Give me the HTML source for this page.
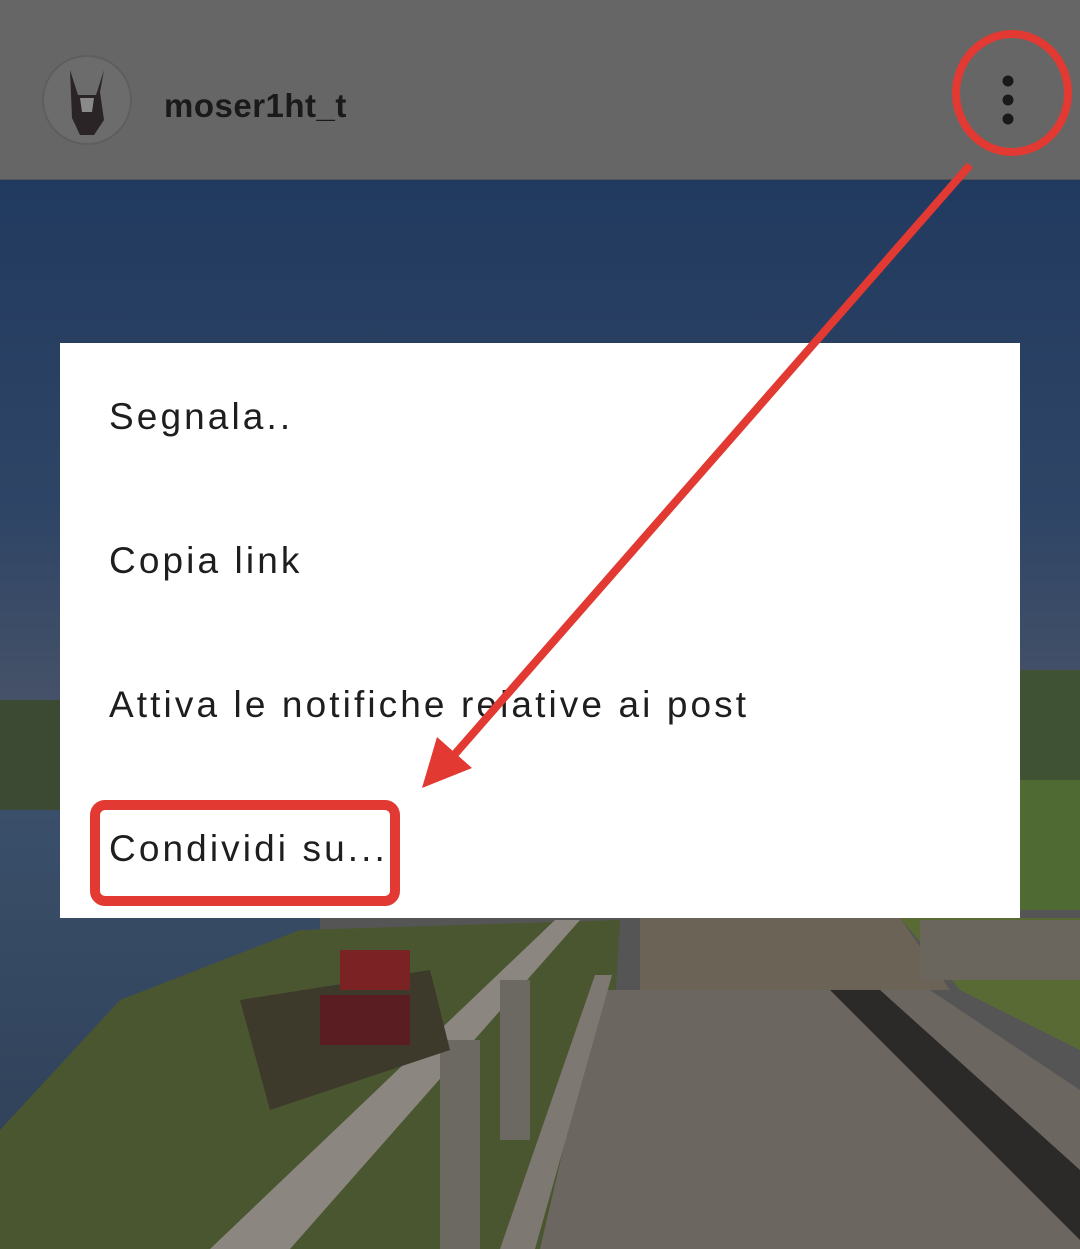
<!DOCTYPE html>
<html><head><meta charset="utf-8"><style>
html,body{margin:0;padding:0;width:1080px;height:1249px;overflow:hidden;background:#555}
.t{position:absolute;left:109px;font-family:"Liberation Sans","Noto Sans CJK JP",sans-serif;font-size:37px;color:#1e1e1e;letter-spacing:3.1px;white-space:nowrap}
</style></head><body>
<svg width="1080" height="1249" style="position:absolute;left:0;top:0">
<defs>
<linearGradient id="sky" x1="0" y1="0" x2="0" y2="1">
<stop offset="0" stop-color="#213a5f"/><stop offset="0.6" stop-color="#2f4566"/><stop offset="1" stop-color="#4a5468"/>
</linearGradient>
<linearGradient id="water" x1="0" y1="0" x2="0" y2="1">
<stop offset="0" stop-color="#3a4f6a"/><stop offset="1" stop-color="#2e3e55"/>
</linearGradient>
</defs>
<rect x="0" y="180" width="1080" height="560" fill="url(#sky)"/>
<rect x="0" y="700" width="60" height="110" fill="#3c4a34"/>
<rect x="1020" y="670" width="60" height="120" fill="#3f5234"/>
<rect x="1020" y="780" width="60" height="130" fill="#4f6a33"/>
<rect x="0" y="810" width="320" height="439" fill="url(#water)"/>
<polygon points="0,1130 120,1000 300,930 620,920 600,1249 0,1249" fill="#4a5630"/>
<polygon points="640,918 900,918 950,990 640,990" fill="#6b6456"/>
<polygon points="900,918 1080,918 1080,1050 960,990" fill="#5a6a35"/>
<polygon points="600,990 930,990 1080,1090 1080,1249 540,1249" fill="#6b6660"/>
<polygon points="830,990 880,990 1080,1170 1080,1240" fill="#2c2a28"/>
<polygon points="210,1249 555,920 580,920 290,1249" fill="#8b8680"/>
<polygon points="500,1249 595,975 612,975 535,1249" fill="#7d7872"/>
<rect x="440" y="1040" width="40" height="209" fill="#6c6862"/>
<rect x="500" y="980" width="30" height="160" fill="#6c6862"/>
<polygon points="240,1000 430,970 450,1050 270,1110" fill="#3d3a2c"/>
<rect x="340" y="950" width="70" height="40" fill="#7a2224"/>
<rect x="320" y="995" width="90" height="50" fill="#5a1e22"/>
<rect x="920" y="920" width="160" height="60" fill="#6a665e"/>
<rect x="0" y="0" width="1080" height="179" fill="#666666"/>
<circle cx="87" cy="100" r="44" fill="#6c6c6c" stroke="#5e5e5e" stroke-width="2"/>
<path d="M70 70 L78 95 L96 95 L104 70 L100 92 L104 120 L94 135 L80 135 L72 118 Z" fill="#2a2426"/>
<path d="M80 98 L94 98 L92 112 L82 112 Z" fill="#8a8a8a"/>
<text x="164" y="117" font-family="Liberation Sans,sans-serif" font-weight="bold" font-size="33" fill="#1a1a1a" letter-spacing="0.5">moser1ht_t</text>
<circle cx="1008" cy="81" r="5.5" fill="#1a1a1a"/>
<circle cx="1008" cy="100" r="5.5" fill="#1a1a1a"/>
<circle cx="1008" cy="119" r="5.5" fill="#1a1a1a"/>
<rect x="60" y="343" width="960" height="575" fill="#ffffff"/>
</svg>
<div class="t" style="top:396px">Segnala..</div>
<div class="t" style="top:540px">Copia link</div>
<div class="t" style="top:684px">Attiva le notifiche relative ai post</div>
<div class="t" style="top:828px">Condividi su...</div>
<svg width="1080" height="1249" style="position:absolute;left:0;top:0">
<ellipse cx="1012" cy="93" rx="56" ry="59" fill="none" stroke="#e23a32" stroke-width="8"/>
<line x1="970" y1="165" x2="448" y2="762" stroke="#e23a32" stroke-width="8"/>
<polygon points="422,788 437,737 472,768" fill="#e23a32"/>
<rect x="95" y="805" width="300" height="96" rx="10" fill="none" stroke="#e23a32" stroke-width="10"/>
</svg>
</body></html>
